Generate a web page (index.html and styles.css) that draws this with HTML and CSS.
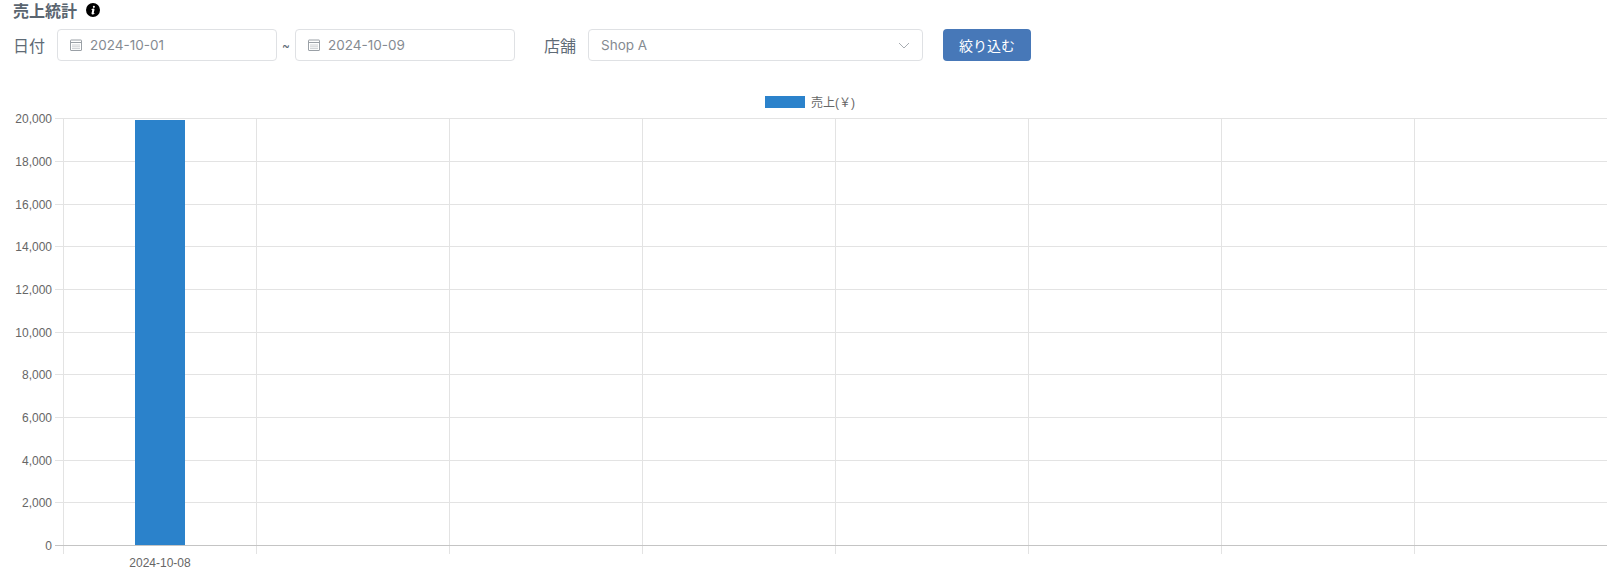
FILE: index.html
```html
<!DOCTYPE html>
<html lang="ja">
<head>
<meta charset="utf-8">
<title>売上統計</title>
<link rel="stylesheet" href="styles.css">
</head>
<body>
<main class="page">
  <header class="title-row">
    <h1 class="title">売上統計</h1>
    <svg class="info" viewBox="0 0 16 16" width="14" height="14"><path fill="#000" d="M8 0a8 8 0 1 0 0 16A8 8 0 0 0 8 0zm1 3.200a1.200 1.200 0 1 1 0 2.400 1.200 1.200 0 0 1 0-2.400zM9.900 12c-.9.9-1.800 1.100-2.600 1-.9-.2-1.100-.8-.9-1.700l.7-3.100c.1-.4 0-.6-.4-.6l-.6.1.1-.6c.8-.5 1.700-.8 2.500-.7.900.1 1.100.7.900 1.500l-.7 3.100c-.1.400 0 .6.300.6.200 0 .500-.1.800-.3z"/></svg>
  </header>
  <form class="filters">
    <label class="label label-date">日付</label>
    <div class="field field-date">
      <svg class="cal" viewBox="0 0 14 14" width="14" height="14"><g fill="none" stroke="#9aa0a6" stroke-width="1"><rect x="1.500" y="2" width="11" height="10.500" rx=".5"/><path d="M1.500 4.500h11"/><path d="M3.500 7h7M3.500 8.800h7M3.500 10.600h7" stroke-dasharray="1 1"/></g></svg>
      <span class="value">2024-10-01</span>
    </div>
    <span class="tilde">~</span>
    <div class="field field-date">
      <svg class="cal" viewBox="0 0 14 14" width="14" height="14"><g fill="none" stroke="#9aa0a6" stroke-width="1"><rect x="1.500" y="2" width="11" height="10.500" rx=".5"/><path d="M1.500 4.500h11"/><path d="M3.500 7h7M3.500 8.800h7M3.500 10.600h7" stroke-dasharray="1 1"/></g></svg>
      <span class="value">2024-10-09</span>
    </div>
    <label class="label label-shop">店舗</label>
    <div class="field field-select">
      <span class="value">Shop A</span>
      <svg class="chev" viewBox="0 0 12 7" width="12" height="7"><path fill="none" stroke="#a8adb2" stroke-width="1" d="M1 1l5 5 5-5"/></svg>
    </div>
    <button class="btn" type="button">絞り込む</button>
  </form>
  <svg class="chart" viewBox="0 0 1618 490" width="1618" height="490">
    <g class="legend">
      <rect class="bar" x="765" y="9" width="40" height="12"/>
      <text class="tick" x="811" y="20">売上(￥)</text>
    </g>
    <g class="grid">
      <path d="M55 31.500H1607M55 74.500H1607M55 117.500H1607M55 159.500H1607M55 202.500H1607M55 245.500H1607M55 287.500H1607M55 330.500H1607M55 373.500H1607M55 415.500H1607"/>
      <path d="M63.500 31V467M256.500 31V467M449.500 31V467M642.500 31V467M835.500 31V467M1028.500 31V467M1221.500 31V467M1414.500 31V467"/>
    </g>
    <path class="zero" d="M55 458.500H1607"/>
    <rect class="bar" x="135" y="33" width="50" height="425"/>
    <g class="tick ylabels">
      <text x="52" y="36">20,000</text>
      <text x="52" y="79">18,000</text>
      <text x="52" y="122">16,000</text>
      <text x="52" y="164">14,000</text>
      <text x="52" y="207">12,000</text>
      <text x="52" y="250">10,000</text>
      <text x="52" y="292">8,000</text>
      <text x="52" y="335">6,000</text>
      <text x="52" y="378">4,000</text>
      <text x="52" y="420">2,000</text>
      <text x="52" y="463">0</text>
    </g>
    <text class="tick xlabel" x="160" y="480">2024-10-08</text>
  </svg>
</main>
</body>
</html>
```

FILE: styles.css
```css
* { box-sizing: border-box; }
html, body { margin: 0; padding: 0; background: #fff; }
body { font-family: "Inter", "Noto Sans CJK JP", sans-serif; color: #5f6b76; overflow: hidden; }
.page { width: 1618px; height: 578px; }
.title-row { display: flex; align-items: center; gap: 9px; height: 20px; padding-left: 13px; }
.title { margin: 0; font-size: 16px; line-height: 20px; font-weight: 700; font-family: "Noto Sans CJK JP", sans-serif; color: #5a6570; }
.info { flex: none; }
.filters { display: flex; align-items: center; height: 32px; margin-top: 9px; padding-left: 13px; }
.label { font-size: 16px; font-family: "Noto Sans CJK JP", sans-serif; color: #5f6b76; }
.label-date { width: 44px; }
.label-shop { width: 44px; margin-left: 29px; }
.field { display: flex; align-items: center; height: 32px; background: #fff; border: 1px solid #dfe1e4; border-radius: 4px; font-size: 13.5px; color: #858b92; }
.field-date { width: 220px; padding-left: 11px; }
.field-select { width: 335px; padding: 0 12px; justify-content: space-between; }
.cal { margin-right: 7px; flex: none; }
.tilde { width: 18px; text-align: center; font-size: 12px; color: #5f6b76; }
.btn { width: 88px; height: 32px; margin-left: 20px; border: 0; border-radius: 4px; background: #4778b8; color: #fff; font-size: 14px; font-family: "Noto Sans CJK JP", sans-serif; padding: 0; }
.chart { display: block; margin-top: 26px; }
.bar { fill: #2b82cb; }
.grid path { fill: none; stroke: #e3e3e3; stroke-width: 1; }
.zero { fill: none; stroke: #c4c4c4; stroke-width: 1; }
.tick { font-family: "Liberation Sans", "Noto Sans CJK JP", sans-serif; font-size: 12px; fill: #666; }
.ylabels { text-anchor: end; }
.xlabel { text-anchor: middle; }
```
